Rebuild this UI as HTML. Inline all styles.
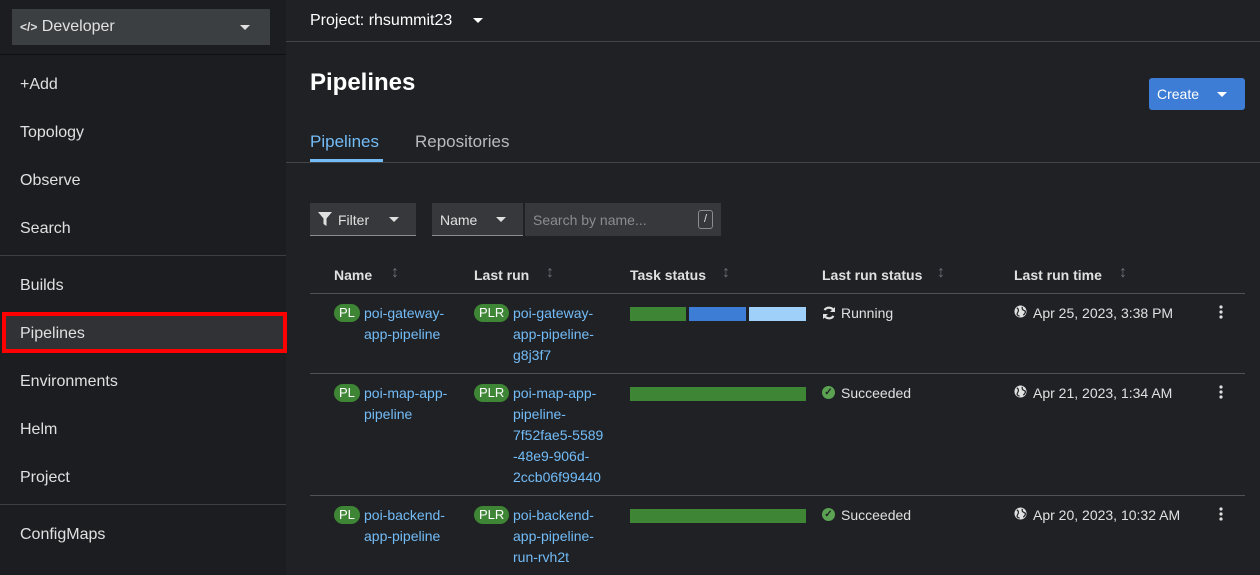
<!DOCTYPE html>
<html><head><style>
*{margin:0;padding:0;box-sizing:border-box}
body{width:1260px;height:575px;overflow:hidden;background:#1f2125;font-family:"Liberation Sans",sans-serif;color:#e0e0e0;position:relative}
.a{position:absolute}
.side{left:0;top:0;width:286px;height:575px;background:#1b1d21}
.nav{left:20px;font-size:16px;color:#e0e0e0}
.hr{height:1px;background:#3c3f42}
.link{color:#73bcf7;font-size:14px;line-height:21px}
.badge{background:#3e8635;color:#fff;border-radius:10px;font-size:13px;padding:0 5px;height:18px;line-height:18px}
.th{font-size:14px;font-weight:bold;color:#e0e0e0}
.sort{color:#6a6e73;font-size:16px;font-weight:bold}
.td{font-size:14px;color:#e0e0e0}
.glb{position:absolute;width:13px;height:13px}
.keb{position:absolute;width:4px;height:14px}
</style></head><body>
<div class="a side"></div>
<div class="a" style="left:12px;top:9px;width:258px;height:36px;background:#3c3f42"></div>
<div class="a" style="left:20px;top:18px;font-size:16px;color:#e0e0e0"><span style="font-size:12px;font-weight:bold">&lt;/&gt;</span> Developer</div>
<div class="a" style="left:240px;top:25px;border-left:5px solid transparent;border-right:5px solid transparent;border-top:5px solid #e0e0e0"></div>
<div class="a hr" style="left:0;top:54px;width:286px;background:#111"></div>
<div class="a nav" style="top:76px">+Add</div>
<div class="a nav" style="top:124px">Topology</div>
<div class="a nav" style="top:172px">Observe</div>
<div class="a nav" style="top:220px">Search</div>
<div class="a hr" style="left:0;top:255px;width:286px"></div>
<div class="a nav" style="top:277px">Builds</div>
<div class="a" style="left:2px;top:312px;width:285px;height:41px;border:4px solid #f00;background:#303236"></div>
<div class="a nav" style="top:325px">Pipelines</div>
<div class="a nav" style="top:373px">Environments</div>
<div class="a nav" style="top:421px">Helm</div>
<div class="a nav" style="top:469px">Project</div>
<div class="a hr" style="left:0;top:504px;width:286px"></div>
<div class="a nav" style="top:526px">ConfigMaps</div>

<div class="a" style="left:310px;top:12px;font-size:16px;color:#fff">Project: rhsummit23</div>
<div class="a" style="left:473px;top:18px;border-left:5px solid transparent;border-right:5px solid transparent;border-top:5px solid #fff"></div>
<div class="a hr" style="left:286px;top:41px;width:974px;background:#444548"></div>
<div class="a" style="left:310px;top:69px;font-size:24px;font-weight:bold;color:#fff">Pipelines</div>
<div class="a" style="left:1149px;top:78px;width:96px;height:32px;background:#3d7dd6;border-radius:3px"></div>
<div class="a" style="left:1157px;top:86px;font-size:14px;color:#fff">Create</div>
<div class="a" style="left:1217px;top:92px;border-left:5px solid transparent;border-right:5px solid transparent;border-top:5px solid #fff"></div>
<div class="a" style="left:310px;top:132px;font-size:17px;color:#73bcf7">Pipelines</div>
<div class="a" style="left:415px;top:132px;font-size:17px;color:#b8bbbe">Repositories</div>
<div class="a hr" style="left:286px;top:162px;width:974px;background:#444548"></div>
<div class="a" style="left:310px;top:159px;width:73px;height:3px;background:#73bcf7"></div>

<div class="a" style="left:310px;top:203px;width:106px;height:33px;background:#36383c;border-bottom:1px solid #8a8d90"></div>
<svg class="a" style="left:318px;top:212px" width="14" height="14" viewBox="0 0 14 14"><path d="M0 0H14L8.5 6.5V14L5.5 12V6.5Z" fill="#e0e0e0"/></svg>
<div class="a" style="left:338px;top:212px;font-size:14px">Filter</div>
<div class="a" style="left:389px;top:217px;border-left:5px solid transparent;border-right:5px solid transparent;border-top:5px solid #e0e0e0"></div>
<div class="a" style="left:432px;top:203px;width:91px;height:33px;background:#36383c;border-bottom:1px solid #8a8d90"></div>
<div class="a" style="left:440px;top:212px;font-size:14px">Name</div>
<div class="a" style="left:496px;top:217px;border-left:5px solid transparent;border-right:5px solid transparent;border-top:5px solid #e0e0e0"></div>
<div class="a" style="left:525px;top:203px;width:196px;height:33px;background:#36383c"></div>
<div class="a" style="left:533px;top:212px;font-size:14px;color:#8a8d90">Search by name...</div>
<div class="a" style="left:698px;top:210px;width:15px;height:19px;border:1px solid #8a8d90;border-radius:3px;font-size:11px;text-align:center;line-height:17px">/</div>

<div class="a th" style="left:334px;top:267px">Name</div><div class="a sort" style="left:391px;top:264px">↕</div>
<div class="a th" style="left:474px;top:267px">Last run</div><div class="a sort" style="left:546px;top:264px">↕</div>
<div class="a th" style="left:630px;top:267px">Task status</div><div class="a sort" style="left:722px;top:264px">↕</div>
<div class="a th" style="left:822px;top:267px">Last run status</div><div class="a sort" style="left:937px;top:264px">↕</div>
<div class="a th" style="left:1014px;top:267px">Last run time</div><div class="a sort" style="left:1119px;top:264px">↕</div>
<div class="a hr" style="left:310px;top:293px;width:935px;background:#4f5255"></div>
<div class="a hr" style="left:310px;top:373px;width:935px;background:#4f5255"></div>
<div class="a hr" style="left:310px;top:495px;width:935px;background:#4f5255"></div>

<!-- row1 -->
<div class="a badge" style="left:334px;top:304px">PL</div>
<div class="a link" style="left:364px;top:303px">poi-gateway-<br>app-pipeline</div>
<div class="a badge" style="left:474px;top:304px">PLR</div>
<div class="a link" style="left:513px;top:303px">poi-gateway-<br>app-pipeline-<br>g8j3f7</div>
<div class="a" style="left:630px;top:307px;width:56px;height:14px;background:#3e8635"></div>
<div class="a" style="left:689px;top:307px;width:57px;height:14px;background:#3d7dd6"></div>
<div class="a" style="left:749px;top:307px;width:57px;height:14px;background:#9fd0f9"></div>
<svg class="a" style="left:822px;top:306px" width="14" height="14" viewBox="0 0 14 14"><path d="M12 5A5.5 5.5 0 0 0 2.5 4M2 9A5.5 5.5 0 0 0 11.5 10" stroke="#e0e0e0" stroke-width="2.2" fill="none"/><path d="M13 1V6H8Z M1 13V8H6Z" fill="#e0e0e0"/></svg>
<div class="a td" style="left:841px;top:305px">Running</div>
<svg class="glb" style="left:1014px;top:305px" viewBox="0 0 14 14"><circle cx="7" cy="7" r="6.5" fill="#e0e0e0"/><path d="M3 3Q6 5 4 8T6 12M9 2Q8 5 11 6T10 11" stroke="#1f2125" stroke-width="1.3" fill="none"/></svg>
<div class="a td" style="left:1033px;top:305px">Apr 25, 2023, 3:38 PM</div>
<svg class="keb" style="left:1219px;top:305px" viewBox="0 0 4 14"><circle cx="2" cy="2" r="1.6" fill="#e0e0e0"/><circle cx="2" cy="7" r="1.6" fill="#e0e0e0"/><circle cx="2" cy="12" r="1.6" fill="#e0e0e0"/></svg>
<!-- row2 -->
<div class="a badge" style="left:334px;top:384px">PL</div>
<div class="a link" style="left:364px;top:383px">poi-map-app-<br>pipeline</div>
<div class="a badge" style="left:474px;top:384px">PLR</div>
<div class="a link" style="left:513px;top:383px">poi-map-app-<br>pipeline-<br>7f52fae5-5589<br>-48e9-906d-<br>2ccb06f99440</div>
<div class="a" style="left:630px;top:387px;width:176px;height:14px;background:#3e8635"></div>
<div class="a" style="left:822px;top:386px;width:13px;height:13px;border-radius:50%;background:#5ba352;color:#1f2125;font-size:10px;text-align:center;line-height:13px;font-weight:bold">✓</div>
<div class="a td" style="left:841px;top:385px">Succeeded</div>
<svg class="glb" style="left:1014px;top:385px" viewBox="0 0 14 14"><circle cx="7" cy="7" r="6.5" fill="#e0e0e0"/><path d="M3 3Q6 5 4 8T6 12M9 2Q8 5 11 6T10 11" stroke="#1f2125" stroke-width="1.3" fill="none"/></svg>
<div class="a td" style="left:1033px;top:385px">Apr 21, 2023, 1:34 AM</div>
<svg class="keb" style="left:1219px;top:385px" viewBox="0 0 4 14"><circle cx="2" cy="2" r="1.6" fill="#e0e0e0"/><circle cx="2" cy="7" r="1.6" fill="#e0e0e0"/><circle cx="2" cy="12" r="1.6" fill="#e0e0e0"/></svg>
<!-- row3 -->
<div class="a badge" style="left:334px;top:506px">PL</div>
<div class="a link" style="left:364px;top:505px">poi-backend-<br>app-pipeline</div>
<div class="a badge" style="left:474px;top:506px">PLR</div>
<div class="a link" style="left:513px;top:505px">poi-backend-<br>app-pipeline-<br>run-rvh2t</div>
<div class="a" style="left:630px;top:509px;width:176px;height:14px;background:#3e8635"></div>
<div class="a" style="left:822px;top:508px;width:13px;height:13px;border-radius:50%;background:#5ba352;color:#1f2125;font-size:10px;text-align:center;line-height:13px;font-weight:bold">✓</div>
<div class="a td" style="left:841px;top:507px">Succeeded</div>
<svg class="glb" style="left:1014px;top:507px" viewBox="0 0 14 14"><circle cx="7" cy="7" r="6.5" fill="#e0e0e0"/><path d="M3 3Q6 5 4 8T6 12M9 2Q8 5 11 6T10 11" stroke="#1f2125" stroke-width="1.3" fill="none"/></svg>
<div class="a td" style="left:1033px;top:507px">Apr 20, 2023, 10:32 AM</div>
<svg class="keb" style="left:1219px;top:507px" viewBox="0 0 4 14"><circle cx="2" cy="2" r="1.6" fill="#e0e0e0"/><circle cx="2" cy="7" r="1.6" fill="#e0e0e0"/><circle cx="2" cy="12" r="1.6" fill="#e0e0e0"/></svg>
</body></html>
